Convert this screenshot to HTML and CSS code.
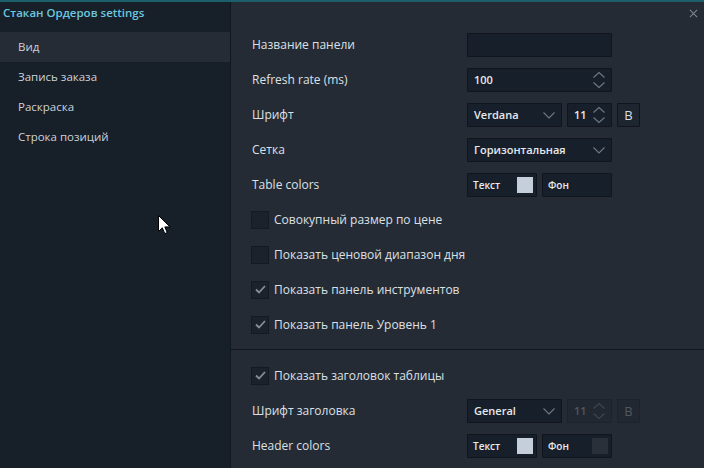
FILE: index.html
```html
<!DOCTYPE html>
<html lang="ru">
<head>
<meta charset="utf-8">
<title>Стакан Ордеров settings</title>
<link rel="stylesheet" href="styles.css">
</head>
<body>
<div class="app">
  <aside class="sidebar">
    <div class="title">Стакан Ордеров settings</div>
    <nav class="nav">
      <div class="nav-item active">Вид</div>
      <div class="nav-item">Запись заказа</div>
      <div class="nav-item">Раскраска</div>
      <div class="nav-item">Строка позиций</div>
    </nav>
  </aside>
  <main class="main">
    <button class="close" aria-label="close">
      <svg width="10" height="10" viewBox="0 0 10 10"><path d="M1 1L9 9M9 1L1 9" stroke="#7d8591" stroke-width="1.2" fill="none"/></svg>
    </button>
    <section class="group">
      <div class="row">
        <div class="label">Название панели</div>
        <div class="ctrl"><div class="field w145"></div></div>
      </div>
      <div class="row">
        <div class="label">Refresh rate (ms)</div>
        <div class="ctrl">
          <div class="field w145 spin"><span class="val">100</span>
            <svg class="spin-ic" width="14" height="18" viewBox="0 0 14 18"><path d="M1.5 6.5L7 1.5L12.5 6.5M1.5 11.5L7 16.5L12.5 11.5" stroke="#6f7884" stroke-width="1.1" fill="none"/></svg>
          </div>
        </div>
      </div>
      <div class="row">
        <div class="label">Шрифт</div>
        <div class="ctrl">
          <div class="field w95 select"><span class="val">Verdana</span>
            <svg class="chev" width="12" height="7" viewBox="0 0 12 7"><path d="M0.5 0.5L6 6L11.5 0.5" stroke="#6f7884" stroke-width="1.1" fill="none"/></svg>
          </div>
          <div class="field w45 spin"><span class="val">11</span>
            <svg class="spin-ic" width="14" height="18" viewBox="0 0 14 18"><path d="M1.5 6.5L7 1.5L12.5 6.5M1.5 11.5L7 16.5L12.5 11.5" stroke="#6f7884" stroke-width="1.1" fill="none"/></svg>
          </div>
          <div class="field bbtn">B</div>
        </div>
      </div>
      <div class="row">
        <div class="label">Сетка</div>
        <div class="ctrl">
          <div class="field w145 select"><span class="val">Горизонтальная</span>
            <svg class="chev" width="12" height="7" viewBox="0 0 12 7"><path d="M0.5 0.5L6 6L11.5 0.5" stroke="#6f7884" stroke-width="1.1" fill="none"/></svg>
          </div>
        </div>
      </div>
      <div class="row">
        <div class="label">Table colors</div>
        <div class="ctrl">
          <div class="field w70 color"><span class="cval">Текст</span><span class="swatch light"></span></div>
          <div class="field w70 color"><span class="cval">Фон</span></div>
        </div>
      </div>
      <div class="row">
        <label class="check"><span class="box"></span>Совокупный размер по цене</label>
      </div>
      <div class="row">
        <label class="check"><span class="box"></span>Показать ценовой диапазон дня</label>
      </div>
      <div class="row">
        <label class="check"><span class="box on"><svg width="11" height="9" viewBox="0 0 11 9"><path d="M1 4.5L4 7.5L10 1" stroke="#858e99" stroke-width="1.8" fill="none"/></svg></span>Показать панель инструментов</label>
      </div>
      <div class="row">
        <label class="check"><span class="box on"><svg width="11" height="9" viewBox="0 0 11 9"><path d="M1 4.5L4 7.5L10 1" stroke="#858e99" stroke-width="1.8" fill="none"/></svg></span>Показать панель Уровень 1</label>
      </div>
    </section>
    <hr class="sep">
    <section class="group">
      <div class="row">
        <label class="check"><span class="box on"><svg width="11" height="9" viewBox="0 0 11 9"><path d="M1 4.5L4 7.5L10 1" stroke="#858e99" stroke-width="1.8" fill="none"/></svg></span>Показать заголовок таблицы</label>
      </div>
      <div class="row">
        <div class="label">Шрифт заголовка</div>
        <div class="ctrl">
          <div class="field w95 select"><span class="val">General</span>
            <svg class="chev" width="12" height="7" viewBox="0 0 12 7"><path d="M0.5 0.5L6 6L11.5 0.5" stroke="#6f7884" stroke-width="1.1" fill="none"/></svg>
          </div>
          <div class="field w45 spin disabled"><span class="val">11</span>
            <svg class="spin-ic" width="14" height="18" viewBox="0 0 14 18"><path d="M1.5 6.5L7 1.5L12.5 6.5M1.5 11.5L7 16.5L12.5 11.5" stroke="#3f4650" stroke-width="1.1" fill="none"/></svg>
          </div>
          <div class="field bbtn disabled">B</div>
        </div>
      </div>
      <div class="row">
        <div class="label">Header colors</div>
        <div class="ctrl">
          <div class="field w70 color"><span class="cval">Текст</span><span class="swatch light"></span></div>
          <div class="field w70 color"><span class="cval">Фон</span><span class="swatch dark"></span></div>
        </div>
      </div>
    </section>
  </main>
</div>
<svg class="cursor" width="13" height="20" viewBox="0 0 13 20"><path d="M0.5 0.5V16.5L4.3 12.8L6.8 18.6L9.2 17.6L6.8 11.9H12L0.5 0.5Z" fill="#fff" stroke="#000" stroke-width="1"/></svg>
</body>
</html>
```
FILE: styles.css
```css
* { box-sizing: border-box; }
html, body { margin: 0; padding: 0; }
body {
  width: 704px;
  height: 468px;
  overflow: hidden;
  background: #252b35;
  font-family: "Open Sans", "Noto Sans", sans-serif;
  font-size: 12px;
  color: #d5dae0;
  position: relative;
}
.app {
  display: flex;
  height: 468px;
  border-top: 2px solid #1c5e6c;
}
.sidebar {
  width: 231px;
  flex: none;
  background: #171f29;
  border-right: 1px solid #11161d;
}
.title {
  height: 30px;
  padding: 2px 0 0 3px;
  line-height: 18px;
  font-weight: 600;
  color: #6cc7df;
  font-size: 11.5px;
}
.nav-item {
  height: 30px;
  line-height: 30px;
  padding-left: 18px;
  color: #cdd2d9;
  font-size: 11.5px;
}
.nav-item.active { background: #262c35; }
.main {
  flex: 1;
  position: relative;
  padding-top: 25px;
}
.close {
  position: absolute;
  right: 6px;
  top: 6px;
  width: 10px;
  height: 10px;
  padding: 0;
  border: 0;
  background: none;
  display: flex;
  align-items: center;
  justify-content: center;
}
.close svg { width: 9px; height: 9px; }
.group { padding-left: 21px; }
.row {
  height: 35px;
  display: flex;
  align-items: center;
}
.label {
  width: 215px;
  flex: none;
  color: #dce0e5;
}
.ctrl {
  display: flex;
  gap: 5px;
  align-items: center;
}
.field {
  height: 24px;
  background: #17202a;
  border: 1px solid #10151b;
  border-radius: 1px;
  display: flex;
  align-items: center;
  position: relative;
  color: #e6e9ed;
  font-size: 11px;
  font-weight: 600;
  flex: none;
}
.w145 { width: 145px; }
.w95 { width: 95px; }
.w45 { width: 45px; }
.w70 { width: 70px; }
.val { padding-left: 6px; }
.spin-ic {
  position: absolute;
  right: 5px;
  top: 2px;
}
.chev {
  position: absolute;
  right: 6px;
  top: 8px;
}
.bbtn {
  width: 23px;
  justify-content: center;
  background: #1d252f;
  border-color: #10151b;
  font-size: 13px;
  font-weight: 500;
  color: #d8dde3;
}
.field.disabled {
  background: #222831;
  border-color: #1d232b;
  color: #4f5762;
}
.color { justify-content: space-between; }
.cval {
  padding-left: 5px;
  font-size: 10px;
  font-weight: 600;
}
.swatch {
  width: 16px;
  height: 16px;
  margin-right: 3px;
}
.swatch.light { background: #c5cfdc; }
.swatch.dark { background: #2a3039; }
.check {
  display: flex;
  align-items: center;
  margin-left: -1px;
  color: #dce0e5;
}
.box {
  width: 18px;
  height: 18px;
  background: #1b222c;
  border: 1px solid #141a21;
  margin-right: 5px;
  display: flex;
  align-items: center;
  justify-content: center;
}
.sep {
  margin: 7px 0 8px 0;
  border: 0;
  height: 1px;
  background: #12171d;
}
.cursor {
  position: absolute;
  left: 158px;
  top: 215px;
}
```
